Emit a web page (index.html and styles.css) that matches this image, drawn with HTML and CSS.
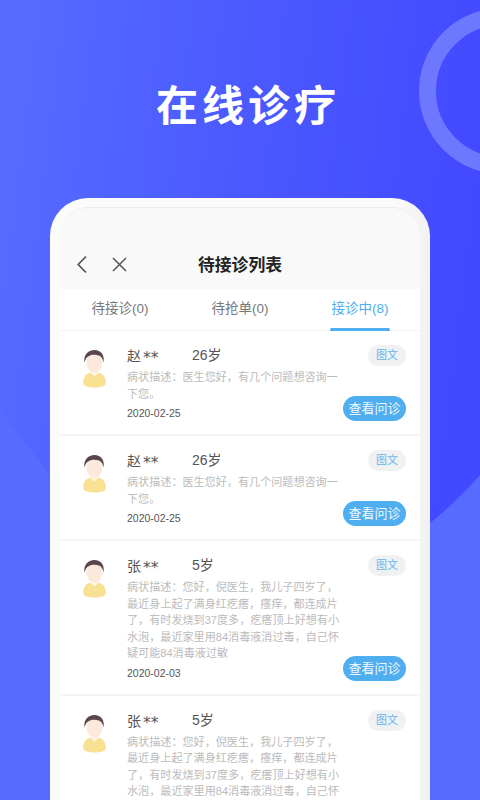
FILE: index.html
```html
<!DOCTYPE html>
<html lang="zh">
<head>
<meta charset="utf-8">
<title>在线诊疗</title>
<link rel="stylesheet" href="styles.css">
</head>
<body>
<svg class="bg" width="480" height="800" viewBox="0 0 480 800" aria-hidden="true">
  <defs>
    <linearGradient id="deep" x1="0" y1="0.15" x2="1" y2="0.3">
      <stop offset="0" stop-color="#566cff"/>
      <stop offset="0.55" stop-color="#4a58ff"/>
      <stop offset="1" stop-color="#4349ff"/>
    </linearGradient>
  </defs>
  <path d="M0 0H480V475C464 493 447 510 430 523C330 590 120 600 50 475C30 450 15 430 0 410Z" fill="url(#deep)"/>
  <circle cx="502" cy="91" r="74.5" fill="none" stroke="#6e78ff" stroke-width="17"/>
</svg>

<main class="screen">
  <header class="hero"><h1>在线诊疗</h1></header>
  <section class="phone">
    <div class="phone-inner">
      <div class="navbar">
        <svg class="ico-back" width="12" height="19" viewBox="0 0 12 19"><path d="M10 1.5 2.2 9.5 10 17.5" fill="none" stroke="#555" stroke-width="1.7"/></svg>
        <svg class="ico-close" width="15" height="15" viewBox="0 0 15 15"><path d="M1 1 14 14M14 1 1 14" fill="none" stroke="#555" stroke-width="1.5"/></svg>
        <div class="nav-title">待接诊列表</div>
      </div>
      <nav class="tabs">
        <div class="tab">待接诊(0)</div>
        <div class="tab">待抢单(0)</div>
        <div class="tab active">接诊中(8)</div>
      </nav>

      <article class="row">
        <div class="avatar-col"><svg class="avatar" viewBox="0 0 23 38"><use href="#person"/></svg></div>
        <div class="main">
          <div class="who"><span class="name">赵<span class="mask">**</span></span><span class="age">26岁</span></div>
          <p class="desc">病状描述&#65306;医生您好&#65292;有几个问题想咨询一下您&#12290;</p>
          <div class="date">2020-02-25</div>
        </div>
        <div class="side"><span class="tag">图文</span><span class="btn">查看问诊</span></div>
      </article>

      <article class="row">
        <div class="avatar-col"><svg class="avatar" viewBox="0 0 23 38"><use href="#person"/></svg></div>
        <div class="main">
          <div class="who"><span class="name">赵<span class="mask">**</span></span><span class="age">26岁</span></div>
          <p class="desc">病状描述&#65306;医生您好&#65292;有几个问题想咨询一下您&#12290;</p>
          <div class="date">2020-02-25</div>
        </div>
        <div class="side"><span class="tag">图文</span><span class="btn">查看问诊</span></div>
      </article>

      <article class="row">
        <div class="avatar-col"><svg class="avatar" viewBox="0 0 23 38"><use href="#person"/></svg></div>
        <div class="main">
          <div class="who"><span class="name">张<span class="mask">**</span></span><span class="age">5岁</span></div>
          <p class="desc">病状描述&#65306;您好&#65292;倪医生&#65292;我儿子四岁了&#65292;最近身上起了满身红疙瘩&#65292;瘙痒&#65292;都连成片了&#65292;有时发烧到37度多&#65292;疙瘩顶上好想有小水泡&#65292;最近家里用84消毒液消过毒&#65292;自己怀疑可能84消毒液过敏</p>
          <div class="date">2020-02-03</div>
        </div>
        <div class="side"><span class="tag">图文</span><span class="btn">查看问诊</span></div>
      </article>

      <article class="row">
        <div class="avatar-col"><svg class="avatar" viewBox="0 0 23 38"><use href="#person"/></svg></div>
        <div class="main">
          <div class="who"><span class="name">张<span class="mask">**</span></span><span class="age">5岁</span></div>
          <p class="desc">病状描述&#65306;您好&#65292;倪医生&#65292;我儿子四岁了&#65292;最近身上起了满身红疙瘩&#65292;瘙痒&#65292;都连成片了&#65292;有时发烧到37度多&#65292;疙瘩顶上好想有小水泡&#65292;最近家里用84消毒液消过毒&#65292;自己怀疑可能84消毒液过敏</p>
          <div class="date">2020-02-03</div>
        </div>
        <div class="side"><span class="tag">图文</span><span class="btn">查看问诊</span></div>
      </article>
    </div>
  </section>
</main>

<svg width="0" height="0" class="defs" aria-hidden="true">
  <symbol id="person" viewBox="0 0 23 38">
    <path d="M0.2 33C0.2 26.5 3.5 23.5 7.5 22.5L11.5 26 15.5 22.5C19.5 23.5 22.8 26.5 22.8 33 22.8 36.5 17 37.6 11.5 37.6 6 37.6 0.2 36.5 0.2 33Z" fill="#f8e193"/>
    <path d="M7.5 22.5 11.5 26.5 15.5 22.5 14 20H9Z" fill="#fff6e6"/>
    <ellipse cx="11.5" cy="12.5" rx="8" ry="10.2" fill="#fce9dc"/>
    <path d="M1.5 12.5C0.3 5 5 0 11.5 0 18 0 21.8 5 20.6 12.5 19.8 9 18.6 7 16.5 5.8 13 4.4 8.5 4.6 6 6 3.5 7.2 2.3 9.5 1.5 12.5Z" fill="#5b4650"/>
  </symbol>
</svg>
</body>
</html>
```
FILE: styles.css
```css
* { box-sizing: border-box; }
html, body { margin: 0; padding: 0; }
body {
  width: 480px;
  height: 800px;
  overflow: hidden;
  position: relative;
  background: #566cff;
  font-family: "Liberation Sans", "Noto Sans CJK SC", sans-serif;
}
.bg { position: absolute; left: 0; top: 0; }
.defs { position: absolute; }
.screen { position: relative; display: flex; flex-direction: column; height: 800px; }
.hero { height: 198px; padding-top: 78px; flex: none; }
.hero h1 {
  margin: 0;
  text-align: center;
  color: #fff;
  font-family: "Noto Sans CJK SC", sans-serif;
  font-size: 42px;
  font-weight: 700;
  line-height: 50px;
  letter-spacing: 4px;
  padding-left: 16px;
}
.phone {
  flex: 1;
  min-height: 0;
  margin: 0 50px;
  padding: 9px 10px 0;
  background: linear-gradient(90deg, #fbfbf9 0%, #fbfbf9 90%, #f1f1f1 100%);
  border-radius: 38px 38px 0 0;
  overflow: hidden;
}
.phone-inner {
  height: 100%;
  background: #f5f5f5;
  border-radius: 28px 28px 0 0;
  border-top: 1px solid #ececec;
  overflow: hidden;
}
.navbar {
  height: 81px;
  padding: 32px 17px 0;
  background: #f9f9f9;
  display: flex;
  align-items: center;
  position: relative;
}
.ico-back { flex: none; margin-right: 24px; margin-left: -1px; }
.ico-close { flex: none; }
.nav-title {
  position: absolute;
  left: 0; right: 0;
  top: 44px;
  text-align: center;
  font-size: 16.8px;
  line-height: 25px;
  font-weight: 700;
  color: #222;
  font-family: "Noto Sans CJK SC", sans-serif;
}
.tabs {
  height: 42px;
  background: #fff;
  display: grid;
  grid-template-columns: repeat(3, 1fr);
  border-bottom: 1px solid #f3f3f3;
}
.tab {
  text-align: center;
  font-size: 13.5px;
  line-height: 40px;
  color: #777;
  position: relative;
}
.tab.active { color: #4eaef0; }
.tab.active::after {
  content: "";
  position: absolute;
  left: 30px;
  right: 30px;
  bottom: -1px;
  height: 3px;
  border-radius: 2px;
  background: #4eaef0;
}
.row {
  display: flex;
  background: #fff;
  padding: 14px 14px 13px 0;
  margin-bottom: 2px;
}
.avatar-col { width: 67px; flex: none; padding: 5px 0 0 23px; }
.avatar { display: block; width: 23px; height: 38px; }
.main { width: 213px; flex: none; }
.who { display: flex; height: 21px; line-height: 21px; font-size: 14px; color: #555; }
.name { width: 65px; font-family: "Noto Sans CJK SC", sans-serif; }
.mask {
  font-family: "DejaVu Sans", sans-serif;
  font-size: 15.5px;
  line-height: 1;
  margin-left: 2px;
  vertical-align: -2px;
}
.desc {
  margin: 3px 0 0;
  font-size: 11.1px;
  line-height: 16.5px;
  color: #bbb;
}
.date { margin-top: 3px; height: 16px; line-height: 16px; font-size: 10.5px; color: #555; }
.side {
  flex: 1;
  display: flex;
  flex-direction: column;
  align-items: flex-end;
  justify-content: space-between;
}
.tag {
  width: 38px;
  height: 21px;
  line-height: 21px;
  text-align: center;
  border-radius: 11px;
  background: #eff1f3;
  color: #64b5ef;
  font-size: 11px;
}
.btn {
  width: 63px;
  height: 25px;
  line-height: 25px;
  text-align: center;
  border-radius: 13px;
  background: #4eaef0;
  color: #f2f8fd;
  font-size: 13px;
  white-space: nowrap;
}
```
